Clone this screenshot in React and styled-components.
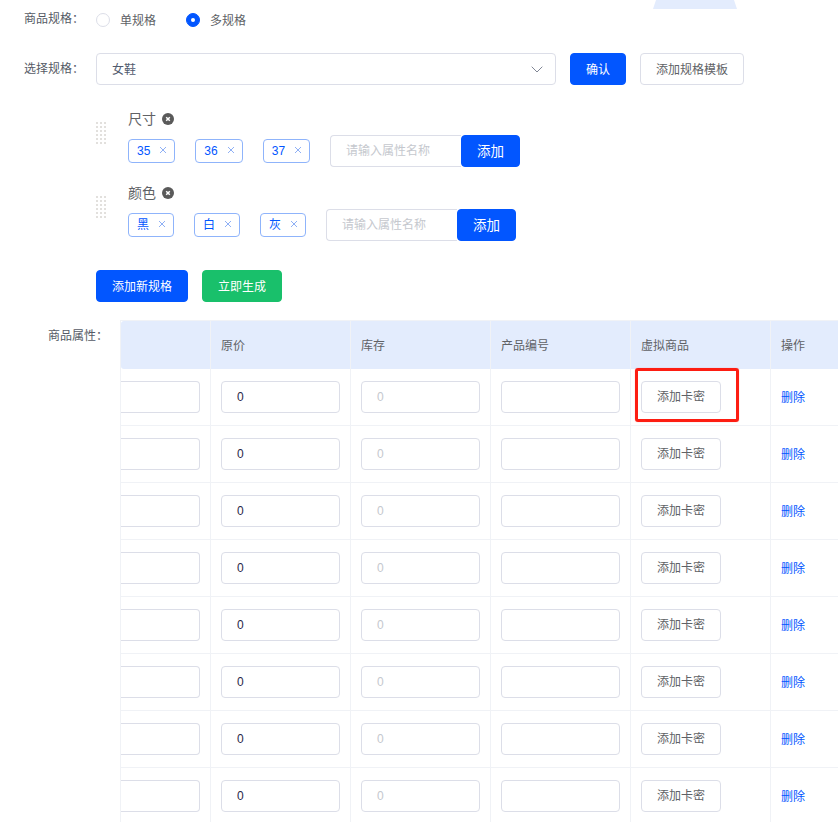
import React from 'react';
import styled, { createGlobalStyle } from 'styled-components';

const GlobalStyle = createGlobalStyle`
	html, body {
		margin: 0;
		padding: 0;
		background: #fff;
	}
	* {
		box-sizing: border-box;
	}
	body {
		font-family: "Liberation Sans", "Noto Sans CJK SC", sans-serif;
		font-size: 12px;
		color: #606266;
	}
`;

const blue = '#0256ff';
const line = '#dcdee8';

const Page = styled.div`
	position: relative;
	width: 838px;
	height: 822px;
	padding-top: 6px;
	overflow: hidden;
`;
const TopShape = styled.div`
	position: absolute;
	top: 0;
	left: 653px;
	width: 84px;
	height: 9px;
	background: #e3ecfd;
	clip-path: polygon(3px 0, 81px 0, 100% 100%, 0 100%);
`;
const FormRow = styled.div`
	display: flex;
	align-items: center;
	height: ${(props) => props.height || 32}px;
	margin-bottom: ${(props) => props.bottom || 0}px;
	padding-left: 24px;
`;
const Label = styled.label`
	width: 72px;
	flex: none;
	line-height: 20px;
	white-space: nowrap;
	color: #555a66;
	padding-bottom: ${(props) => props.lift || 0}px;
`;
const RadioItem = styled.div`
	display: flex;
	align-items: center;
	gap: 10px;
	margin-right: 30px;
`;
const RadioText = styled.span`
	padding-bottom: 2px;
`;
const RadioDot = styled.span`
	display: flex;
	align-items: center;
	justify-content: center;
	width: 14px;
	height: 14px;
	border-radius: 50%;
	border: 1px solid ${(props) => (props.checked ? blue : line)};
	background: ${(props) => (props.checked ? blue : '#fff')};

	&::after {
		content: '';
		display: ${(props) => (props.checked ? 'block' : 'none')};
		width: 4px;
		height: 4px;
		border-radius: 50%;
		background: #fff;
	}
`;
const SelectBox = styled.div`
	display: flex;
	align-items: center;
	justify-content: space-between;
	width: 460px;
	height: 32px;
	padding: 0 12px 0 15px;
	border: 1px solid ${line};
	border-radius: 4px;
	color: #515a6e;
	margin-right: 14px;
`;
const SelectText = styled.span`
	padding-bottom: 2px;
`;
const Button = styled.button`
	height: 32px;
	width: ${(props) => props.width}px;
	flex: none;
	padding: 0 0 2px;
	font: inherit;
	font-size: ${(props) => props.size || 12}px;
	border-radius: 4px;
	cursor: pointer;
	color: ${(props) => (props.color ? '#fff' : '#606266')};
	background: ${(props) => props.color || '#fff'};
	border: 1px solid ${(props) => props.color || line};
`;
const SelectActions = styled.div`
	display: flex;
	gap: 14px;
`;
const SpecList = styled.div`
	margin-top: 24px;
	padding-left: 96px;
	display: flex;
	flex-direction: column;
	gap: 16px;
`;
const SpecGroup = styled.div`
	display: flex;
	gap: 22px;
`;
const DragHandle = styled.svg`
	flex: none;
	width: 10px;
	height: 24px;
	margin-top: 13px;
`;
const SpecBody = styled.div`
	display: flex;
	flex-direction: column;
	gap: 6px;
`;
const SpecTitle = styled.div`
	display: flex;
	align-items: center;
	gap: 6px;
	height: 20px;
	font-size: 14px;
`;
const SpecName = styled.span`
	line-height: 20px;
	height: 20px;
`;
const TagRow = styled.div`
	display: flex;
	align-items: center;
	gap: 20px;
`;
const Tag = styled.span`
	display: flex;
	align-items: center;
	justify-content: space-between;
	height: 24px;
	padding: 0 7px 3px 8px;
	gap: 9px;
	border: 1px solid #8fb4fb;
	border-radius: 4px;
	color: ${blue};
	line-height: 22px;
`;
const TagLabel = styled.span`
	padding-top: 3px;
`;
const AddGroup = styled.div`
	display: flex;
	align-items: center;
`;
const AddInput = styled.div`
	width: 131px;
	height: 32px;
	padding-left: 15px;
	line-height: 31px;
	color: #c5c8ce;
	border: 1px solid ${line};
	border-right: 0;
	border-radius: 4px 0 0 4px;
`;
const ActionRow = styled.div`
	display: flex;
	gap: 14px;
	margin: 29px 0 18px 96px;
`;
const TableRow = styled.div`
	display: flex;
	padding-left: 48px;
`;
const TableLabel = styled(Label)`
	padding-top: 6px;
`;
const Table = styled.div`
	border-left: 1px solid #f0f2f6;
	border-top: 1px solid #f0f2f6;
	flex: none;
`;
const Row = styled.div`
	display: grid;
	grid-template-columns: 90px repeat(4, 140px) 68px;
	height: ${(props) => (props.head ? 48 : 57)}px;
	background: ${(props) => (props.head ? '#e3ecfd' : '#fff')};
	border-radius: ${(props) => (props.head ? '3px 0 0 3px' : 0)};
`;
const Cell = styled.div`
	position: relative;
	display: flex;
	align-items: center;
	padding: 0 10px;
	border-right: 1px solid #f0f2f6;
	border-bottom: ${(props) => (props.head ? 0 : '1px solid #f0f2f6')};
	padding-bottom: ${(props) => (props.head ? '2px' : '1px')};
`;
const ClippedCell = styled(Cell)`
	padding-left: 0;
`;
const Field = styled.div`
	width: 100%;
	height: 32px;
	padding-left: 15px;
	line-height: 31px;
	background: #fff;
	color: ${(props) => (props.disabled ? '#c5c8ce' : '#2a2848')};
	border: 1px solid ${line};
	border-radius: 4px;
`;
const ClippedField = styled(Field)`
	border-left: 0;
	border-radius: 0 4px 4px 0;
`;
const DeleteLink = styled.a`
	color: ${blue};
	cursor: pointer;
	padding-bottom: 1px;
`;
const Highlight = styled.div`
	position: absolute;
	top: -1px;
	left: 4px;
	width: 104px;
	height: 54px;
	border: 3px solid #fd1d12;
	border-radius: 3px;
	box-shadow: 0 0 1px rgba(255, 60, 50, 0.6);
	pointer-events: none;
`;

const CloseIcon = () => (
	<svg width="8" height="8" viewBox="0 0 8 8">
		<path d="M1 1l6 6M7 1l-6 6" stroke="#8fb0f5" strokeWidth="1" fill="none" />
	</svg>
);

const RemoveIcon = () => (
	<svg width="12" height="12" viewBox="0 0 12 12">
		<circle cx="6" cy="6" r="6" fill="#5a5a5a" />
		<path d="M4.2 4.2l3.6 3.6M7.8 4.2l-3.6 3.6" stroke="#fff" strokeWidth="1.5" fill="none" />
	</svg>
);

const ChevronIcon = () => (
	<svg width="12" height="7" viewBox="0 0 12 7">
		<path d="M.7.7L6 6l5.3-5.3" stroke="#808695" strokeWidth="1" fill="none" />
	</svg>
);

const DragDots = () => (
	<DragHandle viewBox="0 0 10 24">
		{[0, 4, 8, 12, 16, 20].map((y) =>
			[0, 4, 8].map((x) => (
				<rect key={`${x}-${y}`} x={x} y={y} width="2" height="2" fill="#e2e0dd" />
			)),
		)}
	</DragHandle>
);

const specs = [
	{ name: '尺寸', values: ['35', '36', '37'] },
	{ name: '颜色', values: ['黑', '白', '灰'] },
];

const rows = [0, 1, 2, 3, 4, 5, 6, 7];

const App = () => {
	return (
		<Page>
			<GlobalStyle />
			<TopShape />
			<FormRow height={28} bottom={19}>
				<Label lift={2}>商品规格：</Label>
				<RadioItem>
					<RadioDot />
					<RadioText>单规格</RadioText>
				</RadioItem>
				<RadioItem>
					<RadioDot checked />
					<RadioText>多规格</RadioText>
				</RadioItem>
			</FormRow>
			<FormRow>
				<Label>选择规格：</Label>
				<SelectBox>
					<SelectText>女鞋</SelectText>
					<ChevronIcon />
				</SelectBox>
				<SelectActions>
					<Button width={56} color={blue}>确认</Button>
					<Button width={104}>添加规格模板</Button>
				</SelectActions>
			</FormRow>
			<SpecList>
				{specs.map((spec) => (
					<SpecGroup key={spec.name}>
						<DragDots />
						<SpecBody>
							<SpecTitle>
								<SpecName>{spec.name}</SpecName>
								<RemoveIcon />
							</SpecTitle>
							<TagRow>
								{spec.values.map((value) => (
									<Tag key={value}>
										<TagLabel>{value}</TagLabel>
										<CloseIcon />
									</Tag>
								))}
								<AddGroup>
									<AddInput>请输入属性名称</AddInput>
									<Button width={59} size={13.5} color={blue}>添加</Button>
								</AddGroup>
							</TagRow>
						</SpecBody>
					</SpecGroup>
				))}
			</SpecList>
			<ActionRow>
				<Button width={92} color={blue}>添加新规格</Button>
				<Button width={80} color="#19c06b">立即生成</Button>
			</ActionRow>
			<TableRow>
				<TableLabel>商品属性：</TableLabel>
				<Table>
					<Row head>
						<Cell head />
						<Cell head>原价</Cell>
						<Cell head>库存</Cell>
						<Cell head>产品编号</Cell>
						<Cell head>虚拟商品</Cell>
						<Cell head>操作</Cell>
					</Row>
					{rows.map((row) => (
						<Row key={row}>
							<ClippedCell>
								<ClippedField />
							</ClippedCell>
							<Cell>
								<Field>0</Field>
							</Cell>
							<Cell>
								<Field disabled>0</Field>
							</Cell>
							<Cell>
								<Field />
							</Cell>
							<Cell>
								<Button width={80}>添加卡密</Button>
								{row === 0 && <Highlight />}
							</Cell>
							<Cell>
								<DeleteLink>删除</DeleteLink>
							</Cell>
						</Row>
					))}
				</Table>
			</TableRow>
		</Page>
	);
};

export default App;
